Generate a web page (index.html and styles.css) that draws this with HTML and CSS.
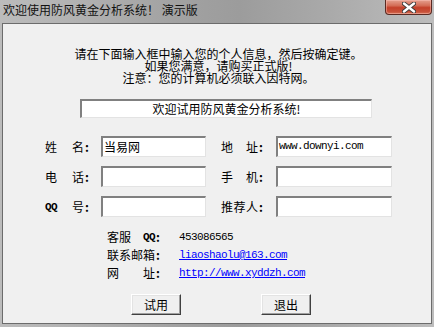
FILE: index.html
```html
<!DOCTYPE html>
<html lang="zh-CN">
<head>
<meta charset="utf-8">
<title>欢迎使用防风黄金分析系统！ 演示版</title>
<link rel="stylesheet" href="styles.css">
</head>
<body>
<div class="window">
  <div class="titlebar">
    <span class="title">欢迎使用防风黄金分析系统！ 演示版</span>
    <span class="close">
      <svg width="14" height="11" viewBox="0 0 14 11"><path d="M2 1.5 L12 9.5 M12 1.5 L2 9.5" stroke="#3a3a3a" stroke-width="4.2" stroke-linecap="round"/><path d="M2 1.5 L12 9.5 M12 1.5 L2 9.5" stroke="#ffffff" stroke-width="2.4" stroke-linecap="round"/></svg>
    </span>
  </div>
  <div class="client">
    <div class="intro">
      <div>请在下面输入框中输入您的个人信息，然后按确定键。</div>
      <div>如果您满意，请购买正式版!</div>
      <div>注意：您的计算机必须联入因特网。</div>
    </div>
    <div class="welcome">欢迎试用防风黄金分析系统!</div>
    <div class="form">
      <div class="row">
        <label class="lbl"><span class="chars"><span>姓</span><span>名</span></span><span class="colon">:</span></label>
        <div class="field left">当易网</div>
        <label class="lbl rlbl"><span class="chars"><span>地</span><span>址</span></span><span class="colon">:</span></label>
        <div class="field right mono">www.downyi.com</div>
      </div>
      <div class="row">
        <label class="lbl"><span class="chars"><span>电</span><span>话</span></span><span class="colon">:</span></label>
        <div class="field left"></div>
        <label class="lbl rlbl"><span class="chars"><span>手</span><span>机</span></span><span class="colon">:</span></label>
        <div class="field right"></div>
      </div>
      <div class="row">
        <label class="lbl"><span class="chars"><span class="qq">QQ</span><span>号</span></span><span class="colon">:</span></label>
        <div class="field left"></div>
        <label class="lbl rlbl"><span class="chars"><span>推</span><span>荐</span><span>人</span></span><span class="colon">:</span></label>
        <div class="field right"></div>
      </div>
    </div>
    <div class="info">
      <div class="irow">
        <span class="ilbl"><span class="chars4"><span>客服</span><span class="qq">QQ</span></span><span class="colon">:</span></span>
        <span class="ival">453086565</span>
      </div>
      <div class="irow">
        <span class="ilbl"><span class="chars4"><span>联系邮箱</span></span><span class="colon">:</span></span>
        <a class="ival link" href="#">liaoshaolu@163.com</a>
      </div>
      <div class="irow">
        <span class="ilbl"><span class="chars4"><span>网</span><span>址</span></span><span class="colon">:</span></span>
        <a class="ival link" href="#">http://www.xyddzh.com</a>
      </div>
    </div>
    <div class="buttons">
      <button class="btn">试用</button>
      <button class="btn">退出</button>
    </div>
  </div>
</div>
</body>
</html>
```
FILE: styles.css
```css
html, body {
  margin: 0;
  padding: 0;
}
body {
  width: 434px;
  height: 327px;
  overflow: hidden;
  font-family: "Noto Sans CJK SC", "Liberation Sans", sans-serif;
  font-size: 12px;
  color: #000;
}
.window {
  width: 434px;
  height: 327px;
  box-sizing: border-box;
  padding: 0 2px 3px 2px;
  display: flex;
  flex-direction: column;
  background: linear-gradient(to right, #bcbcbc 0%, #b0b0b0 20%, #a2a2a2 40%, #9c9c9c 55%, #a9a9a9 75%, #bdbdbd 100%);
}
.titlebar {
  height: 23px;
  display: flex;
  align-items: flex-start;
  flex: none;
}
.title {
  margin-left: 1px;
  margin-top: 3px;
  line-height: 14px;
  font-size: 12px;
  color: #111;
  white-space: pre;
}
.close {
  margin-left: auto;
  width: 47px;
  height: 15px;
  box-sizing: border-box;
  border: 1px solid #5a2a22;
  border-top: none;
  border-radius: 0 0 4px 4px;
  background: linear-gradient(to bottom, #e5a08f 0%, #d46d57 40%, #c4402a 55%, #c8523a 85%, #d77a5e 100%);
  display: flex;
  align-items: center;
  justify-content: center;
  box-shadow: inset 0 0 0 1px rgba(255, 200, 190, 0.45);
}
.close svg {
  display: block;
}
.client {
  flex: 1;
  border: 1px solid #6c6c6c;
  background: #f0f0f0;
  display: flex;
  flex-direction: column;
}
.intro {
  padding-top: 24px;
  padding-left: 3px;
  text-align: center;
  line-height: 12px;
  font-size: 12px;
}
.welcome {
  margin-top: 15px;
  margin-left: 77px;
  width: 292px;
  height: 19px;
  box-sizing: border-box;
  background: #fff;
  border-top: 2px solid #808080;
  border-left: 2px solid #808080;
  border-right: 1px solid #e3e3e3;
  border-bottom: 1px solid #e3e3e3;
  text-align: center;
  line-height: 15px;
  font-size: 12px;
}
.form {
  margin-top: 18px;
  padding-left: 42px;
  display: flex;
  flex-direction: column;
  gap: 9px;
}
.row {
  display: flex;
  align-items: center;
  height: 21px;
}
.lbl {
  display: flex;
  align-items: center;
  width: 56px;
  flex: none;
  line-height: 16px;
}
.rlbl {
  width: 55px;
  margin-left: 15px;
}
.chars {
  display: flex;
  align-items: center;
  justify-content: space-between;
  width: 39px;
}
.rlbl .chars {
  width: 37px;
}
.colon {
  margin-left: 1px;
  font-weight: bold;
}
.qq {
  font-family: "Liberation Mono", "DejaVu Sans Mono", monospace;
  font-weight: bold;
  font-size: 11px;
  letter-spacing: -0.6px;
  line-height: 16px;
}
.mono {
  font-family: "Liberation Mono", "DejaVu Sans Mono", monospace;
}
.field {
  height: 21px;
  box-sizing: border-box;
  background: #fff;
  border-top: 2px solid #808080;
  border-left: 2px solid #808080;
  border-right: 1px solid #e3e3e3;
  border-bottom: 1px solid #e3e3e3;
  padding-left: 1px;
  line-height: 17px;
  font-size: 12px;
}
.field.mono {
  font-size: 11px;
  letter-spacing: -0.6px;
}
.left {
  width: 105px;
}
.right {
  width: 116px;
}
.info {
  margin-top: 11px;
  padding-left: 104px;
  display: flex;
  flex-direction: column;
}
.irow {
  display: flex;
  align-items: center;
  height: 18px;
  line-height: 16px;
}
.ilbl {
  display: flex;
  align-items: center;
  width: 72px;
  flex: none;
}
.chars4 {
  display: flex;
  align-items: center;
  justify-content: space-between;
  width: 48px;
}
.ival {
  font-family: "Liberation Mono", "DejaVu Sans Mono", monospace;
  font-size: 11px;
  letter-spacing: -0.6px;
}
.link {
  color: #0000ff;
  text-decoration: underline;
}
.buttons {
  margin-top: 12px;
  padding-left: 128px;
  display: flex;
  gap: 80px;
}
.btn {
  width: 50px;
  height: 21px;
  margin: 0;
  padding: 0;
  box-sizing: border-box;
  background: #f0f0f0;
  border-top: 1px solid #ffffff;
  border-left: 1px solid #ffffff;
  border-right: 1px solid #404040;
  border-bottom: 1px solid #404040;
  box-shadow: inset -1px -1px 0 #a0a0a0, inset 1px 1px 0 #e3e3e3;
  font-family: "Noto Sans CJK SC", sans-serif;
  font-size: 12px;
  color: #000;
  line-height: 18px;
}
```
